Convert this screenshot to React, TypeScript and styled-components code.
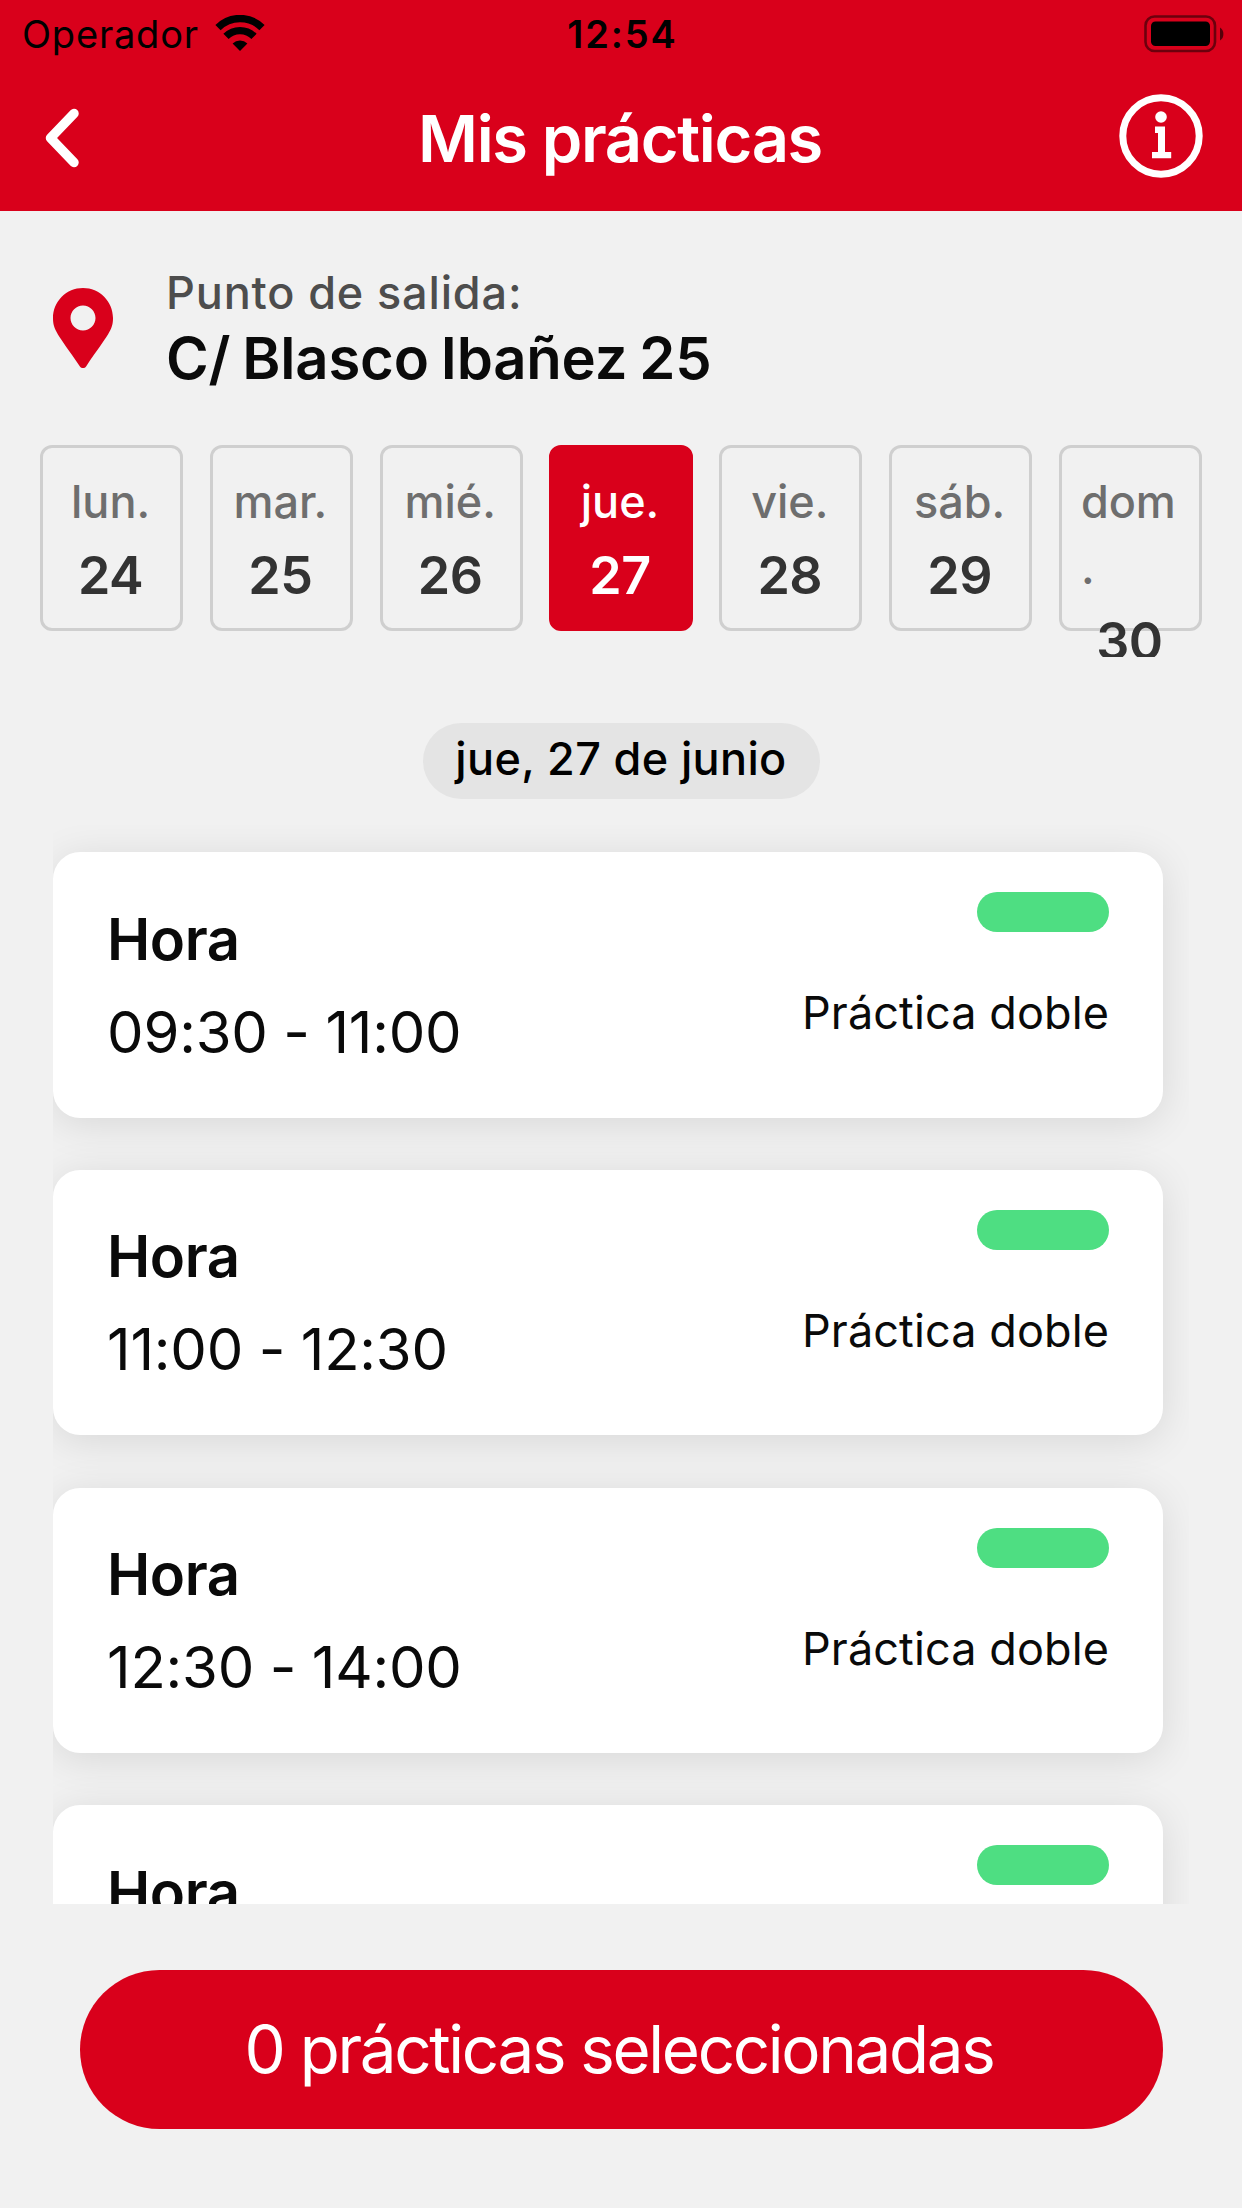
import React from 'react';
import styled, { createGlobalStyle } from 'styled-components';

const RED = '#d9001b';

const GlobalStyle = createGlobalStyle`
  * { box-sizing: border-box; }
  body { margin: 0; background: #f1f1f1; }
`;

const Screen = styled.div`
  width: 1242px;
  height: 2208px;
  overflow: hidden;
  display: flex;
  flex-direction: column;
  background: #f1f1f1;
  color: #0a0a0a;
  font-family: Inter, "Liberation Sans", sans-serif;
`;

const Header = styled.header`
  flex: none;
  height: 211px;
  background: ${RED};
`;

const StatusBar = styled.div`
  display: grid;
  grid-template-columns: 1fr auto 1fr;
  align-items: center;
  height: 66px;
  padding: 0 18px 0 22px;
  color: #000;
`;

const Carrier = styled.div`
  display: flex;
  align-items: center;
  gap: 16px;
  font-size: 38px;
  line-height: 66px;
  letter-spacing: 0.8px;
`;

const Clock = styled.div`
  padding: 1px 1px 0 0;
  font-size: 38px;
  line-height: 66px;
  font-weight: 600;
  letter-spacing: 1.9px;
`;

const Battery = styled.svg`
  display: block;
  justify-self: end;
`;

const NavBar = styled.div`
  display: grid;
  grid-template-columns: 1fr auto 1fr;
  align-items: center;
  height: 140px;
  padding: 0 39px 0 40px;
  color: #fff;
`;

const Title = styled.h1`
  margin: 6px 3px 0 0;
  font-size: 65px;
  line-height: 80px;
  font-weight: 600;
  letter-spacing: -1.35px;
`;

const IconButton = styled.button<{ $end?: boolean }>`
  display: flex;
  justify-self: ${(p) => (p.$end ? 'end' : 'start')};
  padding: ${(p) => (p.$end ? '0' : '4px 0 0 1px')};
  border: 0;
  background: none;
  color: inherit;
`;

const Departure = styled.section`
  flex: none;
  display: flex;
  align-items: center;
  gap: 53px;
  height: 234px;
  padding: 0 53px 0 53px;
`;

const Pin = styled.svg`
  display: block;
  flex: none;
  margin-top: -1px;
`;

const DepartureLabel = styled.div`
  font-size: 45px;
  line-height: 60px;
  font-weight: 500;
  letter-spacing: 0.85px;
  color: #4d4d4d;
`;

const DepartureAddress = styled.div`
  font-size: 58px;
  line-height: 70px;
  font-weight: 600;
  letter-spacing: -0.2px;
  word-spacing: -2.4px;
`;

const Week = styled.div`
  flex: none;
  display: grid;
  grid-template-columns: repeat(7, 1fr);
  column-gap: 26.7px;
  height: 212px;
  padding: 0 40px 26px;
  overflow: hidden;
`;

const Day = styled.div<{ $active?: boolean }>`
  display: flex;
  flex-direction: column;
  align-items: center;
  height: 185.5px;
  padding: 21px 21px 0 19px;
  border: 3px solid ${(p) => (p.$active ? RED : '#cfcfcf')};
  border-radius: 12px;
  background: ${(p) => (p.$active ? RED : 'transparent')};
  color: ${(p) => (p.$active ? '#fff' : '#333')};
`;

const DayName = styled.div<{ $active?: boolean }>`
  max-width: 98px;
  font-size: 45px;
  line-height: 66px;
  font-weight: 500;
  color: ${(p) => (p.$active ? '#fff' : '#6e6e6e')};
  overflow-wrap: anywhere;
`;

const DayNumber = styled.div<{ $active?: boolean }>`
  padding-top: 2px;
  font-size: 52px;
  line-height: 78px;
  font-weight: ${(p) => (p.$active ? 600 : 560)};
  letter-spacing: -0.5px;
`;

const DateRow = styled.div`
  flex: none;
  display: flex;
  justify-content: center;
  padding-top: 66px;
  height: 168px;
`;

const DatePill = styled.div`
  width: 397px;
  height: 76px;
  border-radius: 38px;
  background: #e4e4e4;
  text-align: center;
  font-size: 45px;
  line-height: 71px;
  font-weight: 500;
  letter-spacing: 0.35px;
  color: #000;
`;

const SlotList = styled.div`
  flex: none;
  display: flex;
  flex-direction: column;
  gap: 52.3px;
  width: 1136px;
  height: 1079px;
  margin-left: 53px;
  padding: 27px 26px 0 0;
  overflow: hidden;
`;

const SlotCard = styled.article`
  flex: none;
  display: flex;
  justify-content: space-between;
  height: 265.5px;
  padding: 40px 54px 0 54px;
  border-radius: 27px;
  background: #fff;
  box-shadow: 0 6px 40px rgba(0, 0, 0, 0.105);
`;

const SlotTimes = styled.div`
  padding-top: 10.5px;
`;

const SlotHeading = styled.div`
  font-size: 58px;
  line-height: 72px;
  font-weight: 600;
  letter-spacing: -0.4px;
`;

const SlotHours = styled.div`
  padding-top: 21px;
  font-size: 58px;
  line-height: 72px;
  letter-spacing: -0.2px;
  word-spacing: -0.5px;
`;

const SlotMeta = styled.div`
  display: flex;
  flex-direction: column;
  align-items: flex-end;
`;

const Availability = styled.div`
  width: 132px;
  height: 40px;
  border-radius: 20px;
  background: #4ede82;
`;

const SlotKind = styled.div`
  padding-top: 51px;
  font-size: 45px;
  line-height: 60px;
  letter-spacing: 0.1px;
`;

const Footer = styled.footer`
  flex: 1;
  padding: 66px 79px 0 80px;
`;

const SubmitButton = styled.button`
  display: block;
  width: 100%;
  height: 159px;
  padding: 0 5px 0 0;
  border: 0;
  border-radius: 80px;
  background: ${RED};
  color: #fff;
  font-family: inherit;
  font-size: 65.5px;
  line-height: 159px;
  letter-spacing: -2.35px;
`;

const days = [
  { name: 'lun.', number: 24 },
  { name: 'mar.', number: 25 },
  { name: 'mié.', number: 26 },
  { name: 'jue.', number: 27, active: true },
  { name: 'vie.', number: 28 },
  { name: 'sáb.', number: 29 },
  { name: 'dom.', number: 30 },
];

const slots: { id: number; hours?: string; kind?: string }[] = [
  { id: 1, hours: '09:30 - 11:00', kind: 'Práctica doble' },
  { id: 2, hours: '11:00 - 12:30', kind: 'Práctica doble' },
  { id: 3, hours: '12:30 - 14:00', kind: 'Práctica doble' },
  { id: 4 },
];

const WifiIcon = () => (
  <svg width="50" height="37" viewBox="0 0 50 37">
    <g fill="none" stroke="#000" strokeWidth="7.4">
      <path d="M3 12.6 A31.2 31.2 0 0 1 47 12.6" />
      <path d="M11 21.4 A19.8 19.8 0 0 1 39 21.4" />
    </g>
    <path d="M25 36 L17.6 28.6 A10.5 10.5 0 0 1 32.4 28.6 Z" />
  </svg>
);

const BatteryIcon = () => (
  <Battery width="80" height="38" viewBox="0 0 80 38">
    <rect x="1.5" y="1.5" width="69.5" height="34.5" rx="9" fill="none" stroke="#000" strokeOpacity="0.5" strokeWidth="2.6" />
    <rect x="7" y="6.5" width="59" height="24.5" rx="4.5" />
    <path d="M76 12.5 Q79.4 14.5 79.4 19 Q79.4 23.5 76 25.5 Z" fillOpacity="0.6" />
  </Battery>
);

export default function App() {
  return (
    <>
      <GlobalStyle />
      <Screen>
        <Header>
          <StatusBar>
            <Carrier>
              Operador
              <WifiIcon />
            </Carrier>
            <Clock>12:54</Clock>
            <BatteryIcon />
          </StatusBar>
          <NavBar>
            <IconButton aria-label="Volver">
              <svg width="44" height="64" viewBox="0 0 44 64">
                <path d="M33 7.5 L9.5 32 L33 56.5" fill="none" stroke="#fff" strokeWidth="9.5" strokeLinecap="round" strokeLinejoin="round" />
              </svg>
            </IconButton>
            <Title>Mis prácticas</Title>
            <IconButton $end aria-label="Información">
              <svg width="84" height="84" viewBox="0 0 84 84">
                <circle cx="42" cy="42" r="38.2" fill="none" stroke="#fff" strokeWidth="7" />
                <circle cx="42" cy="23" r="5.8" fill="#fff" />
                <path d="M36 32.5 H46 V58 H52.2 V64.3 H33 V58 H39 V39 H36 Z" fill="#fff" />
              </svg>
            </IconButton>
          </NavBar>
        </Header>

        <Departure>
          <Pin width="60" height="80" viewBox="0 0 384 512">
            <path
              fill={RED}
              d="M172.268 501.67C26.97 291.031 0 269.413 0 192 0 85.961 85.961 0 192 0s192 85.961 192 192c0 77.413-26.97 99.031-172.268 309.67-9.535 13.774-29.93 13.773-39.464 0zM192 272c44.183 0 80-35.817 80-80s-35.817-80-80-80-80 35.817-80 80 35.817 80 80 80z"
            />
          </Pin>
          <div>
            <DepartureLabel>Punto de salida:</DepartureLabel>
            <DepartureAddress>C/ Blasco Ibañez 25</DepartureAddress>
          </div>
        </Departure>

        <Week>
          {days.map((d) => (
            <Day key={d.number} $active={d.active}>
              <DayName $active={d.active}>{d.name}</DayName>
              <DayNumber $active={d.active}>{d.number}</DayNumber>
            </Day>
          ))}
        </Week>

        <DateRow>
          <DatePill>jue, 27 de junio</DatePill>
        </DateRow>

        <SlotList>
          {slots.map((slot) => (
            <SlotCard key={slot.id}>
              <SlotTimes>
                <SlotHeading>Hora</SlotHeading>
                {slot.hours && <SlotHours>{slot.hours}</SlotHours>}
              </SlotTimes>
              <SlotMeta>
                <Availability />
                {slot.kind && <SlotKind>{slot.kind}</SlotKind>}
              </SlotMeta>
            </SlotCard>
          ))}
        </SlotList>

        <Footer>
          <SubmitButton>0 prácticas seleccionadas</SubmitButton>
        </Footer>
      </Screen>
    </>
  );
}
